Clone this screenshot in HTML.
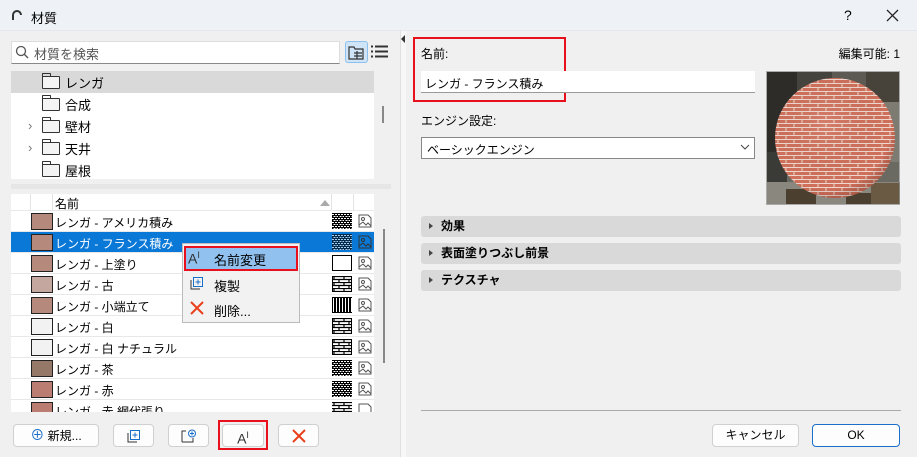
<!DOCTYPE html>
<html><head><meta charset="utf-8">
<style>
*{box-sizing:border-box;margin:0;padding:0}
body{width:917px;height:457px;overflow:hidden;background:#f0f0f0;font-family:"Liberation Sans","Noto Sans CJK JP",sans-serif;font-size:12px;color:#000;position:relative}
.a{position:absolute}
.title{left:0;top:0;width:917px;height:31px;background:#eef2f7;border-bottom:1px solid #e4e8ee}
.row{position:absolute;left:11px;width:363px;height:21px;border-bottom:1px solid #e8e8e8;background:#fff}
.sw{position:absolute;left:20px;top:2px;width:22px;height:17px;border:1px solid #222}
.rt{position:absolute;left:44px;top:3px;white-space:nowrap}
.pat{position:absolute;left:321px;top:2px;width:20px;height:16px}
.img{position:absolute;left:347px;top:3px;width:14px;height:14px}
.btn{position:absolute;top:424px;height:23px;background:#fdfdfd;border:1px solid #d0d0d0;border-radius:4px;text-align:center;line-height:21px}
.sec{position:absolute;left:421px;width:480px;height:21px;background:#d9d9d9;border-radius:3px;font-weight:bold;padding-left:20px;line-height:21px}
.sec:before{content:"";position:absolute;left:8px;top:7px;border-left:4px solid #444;border-top:3.5px solid transparent;border-bottom:3.5px solid transparent}
.tr{position:absolute;left:11px;width:363px;height:22px}
.fd{position:absolute;left:31px;top:5px;width:18px;height:13px;border:1.3px solid #333;border-radius:1px;background:#f4f4f4}
.fd:before{content:"";position:absolute;left:-1px;top:-4px;width:7px;height:3px;border:1.3px solid #333;border-bottom:none;border-radius:1px 1px 0 0}
.tt{position:absolute;left:54px;top:2px;font-size:13px}
.chev{position:absolute;left:17px;top:3px;color:#777;font-size:13px}
</style></head><body>
<svg width="0" height="0" style="position:absolute">
<defs>
<pattern id="b1" width="6" height="4" patternUnits="userSpaceOnUse"><rect width="6" height="4" fill="#000"/><rect x="0" y="1" width="2" height="1" fill="#fff"/><rect x="3" y="1" width="2" height="1" fill="#fff"/><rect x="1.5" y="3" width="2" height="1" fill="#fff"/><rect x="4.5" y="3" width="1.5" height="1" fill="#fff"/></pattern>
<pattern id="b2" width="10" height="6" patternUnits="userSpaceOnUse"><rect width="10" height="6" fill="#fff"/><path d="M0 0.5H10M0 3.5H10M2 0V3M7 3V6" stroke="#000" stroke-width="1.2"/></pattern>
<pattern id="b3" width="3" height="16" patternUnits="userSpaceOnUse"><rect width="3" height="16" fill="#000"/><rect x="1" y="1" width="1" height="14" fill="#fff"/></pattern>
<pattern id="br" width="16" height="8" patternUnits="userSpaceOnUse"><rect width="16" height="8" fill="#d0705a"/><path d="M0 .5H16M0 4.5H16M4 0V4M12 4V8" stroke="#eed8d0" stroke-width="1"/></pattern>
<radialGradient id="sh" cx="0.45" cy="0.4" r="0.6"><stop offset="0" stop-color="#fff" stop-opacity=".1"/><stop offset=".8" stop-color="#000" stop-opacity="0"/><stop offset="1" stop-color="#5a2010" stop-opacity=".35"/></radialGradient>
<clipPath id="cp"><circle cx="69" cy="67" r="60"/></clipPath>
</defs></svg>

<div class="a title"></div>
<svg class="a" style="left:11px;top:9px" width="12" height="12"><path d="M2 11V6a4 4 0 0 1 8 0" fill="none" stroke="#333" stroke-width="2"/></svg>
<div class="a" style="left:31px;top:8px;font-size:13px">材質</div>
<div class="a" style="left:844px;top:7px;font-size:14px">?</div>
<svg class="a" style="left:886px;top:9px" width="13" height="13"><path d="M1 1L12 12M12 1L1 12" stroke="#222" stroke-width="1.3"/></svg>

<div class="a" style="left:11px;top:41px;width:329px;height:23px;background:#fff;border:1px solid #ddd;border-bottom:1px solid #888"></div>
<svg class="a" style="left:15px;top:45px" width="14" height="14"><circle cx="6" cy="6" r="4.5" fill="none" stroke="#555" stroke-width="1.3"/><path d="M9.3 9.3L13 13" stroke="#555" stroke-width="1.4"/></svg>
<div class="a" style="left:34px;top:44px;color:#555;font-size:13px">材質を検索</div>
<div class="a" style="left:345px;top:41px;width:23px;height:22px;background:#cfe4f7;border:1px solid #8cc0ee;border-radius:3px"></div>
<svg class="a" style="left:348px;top:45px" width="17" height="15"><path d="M1 2H6L7 4H15V14H1Z" fill="none" stroke="#333" stroke-width="1.2"/><path d="M6 8H14M6 11H14M9 6V14" stroke="#333" stroke-width="1.2"/></svg>
<svg class="a" style="left:371px;top:45px" width="17" height="13"><path d="M0 1.5H2M4 1.5H17M0 6.5H2M4 6.5H17M0 11.5H2M4 11.5H17" stroke="#333" stroke-width="2"/></svg>

<div class="a" style="left:11px;top:71px;width:363px;height:108px;background:#fff"></div>
<div class="tr" style="top:71px;background:#d9d9d9"><div class="fd"></div><div class="tt">レンガ</div></div>
<div class="tr" style="top:93px"><div class="fd"></div><div class="tt">合成</div></div>
<div class="tr" style="top:115px"><div class="chev">›</div><div class="fd"></div><div class="tt">壁材</div></div>
<div class="tr" style="top:137px"><div class="chev">›</div><div class="fd"></div><div class="tt">天井</div></div>
<div class="tr" style="top:159px"><div class="fd"></div><div class="tt">屋根</div></div>
<div class="a" style="left:382px;top:106px;width:2px;height:17px;background:#888"></div>
<div class="a" style="left:11px;top:184px;width:380px;height:5px;background:#e6e6e6"></div>

<div class="a" style="left:11px;top:194px;width:363px;height:218px;background:#fff"></div>
<div class="a" style="left:11px;top:194px;width:363px;height:17px;background:#fff;border-bottom:1px solid #e8e8e8"></div>
<div class="a" style="left:30px;top:194px;width:1px;height:17px;background:#e4e4e4"></div>
<div class="a" style="left:52px;top:194px;width:1px;height:17px;background:#e4e4e4"></div>
<div class="a" style="left:331px;top:194px;width:1px;height:17px;background:#e4e4e4"></div>
<div class="a" style="left:353px;top:194px;width:1px;height:17px;background:#e4e4e4"></div>
<div class="a" style="left:55px;top:195px">名前</div>
<div class="a" style="left:320px;top:200px;border-bottom:6px solid #aaa;border-left:5px solid transparent;border-right:5px solid transparent"></div>

<div class="row" style="top:211px"><div class="sw" style="background:#b58a7c"></div><div class="rt">レンガ - アメリカ積み</div><svg class="pat"><rect width="20" height="16" fill="url(#b1)"/></svg><svg class="img" viewBox="0 0 14 14"><path d="M1 1H10L13 4V13H1Z" fill="none" stroke="#555"/><circle cx="5" cy="5" r="1.5" fill="none" stroke="#555"/><path d="M1 11L5 8L8 11L10 9L13 12" fill="none" stroke="#555"/></svg></div>
<div class="row" style="top:232px;background:#0a78d7;color:#fff"><div class="sw" style="background:#b58a7c"></div><div class="rt">レンガ - フランス積み</div><svg class="pat"><rect width="20" height="16" fill="url(#b1)"/><rect width="20" height="16" fill="#0a78d7" opacity=".35"/></svg><svg class="img" viewBox="0 0 14 14"><path d="M1 1H10L13 4V13H1Z" fill="none" stroke="#333"/><circle cx="5" cy="5" r="1.5" fill="none" stroke="#333"/><path d="M1 11L5 8L8 11L10 9L13 12" fill="none" stroke="#333"/></svg></div>
<div class="row" style="top:253px"><div class="sw" style="background:#b58a7c"></div><div class="rt">レンガ - 上塗り</div><svg class="pat"><rect x=".5" y=".5" width="19" height="15" fill="#fff" stroke="#000"/></svg><svg class="img" viewBox="0 0 14 14"><path d="M1 1H10L13 4V13H1Z" fill="none" stroke="#555"/><circle cx="5" cy="5" r="1.5" fill="none" stroke="#555"/><path d="M1 11L5 8L8 11L10 9L13 12" fill="none" stroke="#555"/></svg></div>
<div class="row" style="top:274px"><div class="sw" style="background:#c4a8a0"></div><div class="rt">レンガ - 古</div><svg class="pat"><rect width="20" height="16" fill="url(#b2)"/><rect x=".5" y=".5" width="19" height="15" fill="none" stroke="#000"/></svg><svg class="img" viewBox="0 0 14 14"><path d="M1 1H10L13 4V13H1Z" fill="none" stroke="#555"/><circle cx="5" cy="5" r="1.5" fill="none" stroke="#555"/><path d="M1 11L5 8L8 11L10 9L13 12" fill="none" stroke="#555"/></svg></div>
<div class="row" style="top:295px"><div class="sw" style="background:#b58a7c"></div><div class="rt">レンガ - 小端立て</div><svg class="pat"><rect width="20" height="16" fill="url(#b3)"/></svg><svg class="img" viewBox="0 0 14 14"><path d="M1 1H10L13 4V13H1Z" fill="none" stroke="#555"/><circle cx="5" cy="5" r="1.5" fill="none" stroke="#555"/><path d="M1 11L5 8L8 11L10 9L13 12" fill="none" stroke="#555"/></svg></div>
<div class="row" style="top:316px"><div class="sw" style="background:#f2f2f2"></div><div class="rt">レンガ - 白</div><svg class="pat"><rect width="20" height="16" fill="url(#b2)"/><rect x=".5" y=".5" width="19" height="15" fill="none" stroke="#000"/></svg><svg class="img" viewBox="0 0 14 14"><path d="M1 1H10L13 4V13H1Z" fill="none" stroke="#555"/><circle cx="5" cy="5" r="1.5" fill="none" stroke="#555"/><path d="M1 11L5 8L8 11L10 9L13 12" fill="none" stroke="#555"/></svg></div>
<div class="row" style="top:337px"><div class="sw" style="background:#f2f2f2"></div><div class="rt">レンガ - 白 ナチュラル</div><svg class="pat"><rect width="20" height="16" fill="url(#b2)"/><rect x=".5" y=".5" width="19" height="15" fill="none" stroke="#000"/></svg><svg class="img" viewBox="0 0 14 14"><path d="M1 1H10L13 4V13H1Z" fill="none" stroke="#555"/><circle cx="5" cy="5" r="1.5" fill="none" stroke="#555"/><path d="M1 11L5 8L8 11L10 9L13 12" fill="none" stroke="#555"/></svg></div>
<div class="row" style="top:358px"><div class="sw" style="background:#957868"></div><div class="rt">レンガ - 茶</div><svg class="pat"><rect width="20" height="16" fill="url(#b1)"/></svg><svg class="img" viewBox="0 0 14 14"><path d="M1 1H10L13 4V13H1Z" fill="none" stroke="#555"/><circle cx="5" cy="5" r="1.5" fill="none" stroke="#555"/><path d="M1 11L5 8L8 11L10 9L13 12" fill="none" stroke="#555"/></svg></div>
<div class="row" style="top:379px"><div class="sw" style="background:#bb7c72"></div><div class="rt">レンガ - 赤</div><svg class="pat"><rect width="20" height="16" fill="url(#b1)"/></svg><svg class="img" viewBox="0 0 14 14"><path d="M1 1H10L13 4V13H1Z" fill="none" stroke="#555"/><circle cx="5" cy="5" r="1.5" fill="none" stroke="#555"/><path d="M1 11L5 8L8 11L10 9L13 12" fill="none" stroke="#555"/></svg></div>
<div class="row" style="top:400px;height:12px;overflow:hidden;border:none"><div class="sw" style="background:#bb7c72"></div><div class="rt">レンガ - 赤 網代張り</div><svg class="pat"><rect width="20" height="16" fill="url(#b2)"/></svg><svg class="img" viewBox="0 0 14 14"><path d="M1 1H10L13 4V13H1Z" fill="none" stroke="#555"/></svg></div>
<div class="a" style="left:383px;top:229px;width:2px;height:134px;background:#888"></div>

<div class="a" style="left:182px;top:243px;width:118px;height:80px;background:#f2f2f2;border:1px solid #bbb"></div>
<div class="a" style="left:184px;top:246px;width:114px;height:25px;background:#91c1ee;border:2px solid #e8101c"></div>
<div class="a" style="left:188px;top:250px;font-size:14px;color:#333">A<sup style="font-size:9px">I</sup></div>
<div class="a" style="left:214px;top:250px;font-size:13px">名前変更</div>
<svg class="a" style="left:190px;top:276px" width="14" height="14"><path d="M1 4V13H10" fill="none" stroke="#333"/><rect x="3.5" y="1.5" width="9" height="9" fill="none" stroke="#1a6fc9"/><path d="M8 3.5V8.5M5.5 6H10.5" stroke="#1a6fc9"/></svg>
<div class="a" style="left:214px;top:276px;font-size:13px">複製</div>
<svg class="a" style="left:190px;top:301px" width="14" height="14"><path d="M1 1L13 13M13 1L1 13" stroke="#e8401c" stroke-width="2"/></svg>
<div class="a" style="left:214px;top:301px;font-size:13px">削除...</div>

<div class="btn" style="left:13px;width:86px"><span style="color:#1a6fc9;font-size:14px">⊕</span> 新規...</div>
<div class="btn" style="left:113px;width:41px"><svg style="margin-top:4px" width="14" height="14"><path d="M1 4V13H10" fill="none" stroke="#333"/><rect x="3.5" y="1.5" width="9" height="9" fill="none" stroke="#1a6fc9"/><path d="M8 3.5V8.5M5.5 6H10.5" stroke="#1a6fc9"/></svg></div>
<div class="btn" style="left:168px;width:41px"><svg style="margin-top:4px" width="16" height="14"><path d="M1 13V2H5M1 13H12V9" fill="none" stroke="#333"/><circle cx="11" cy="4.5" r="3.5" fill="none" stroke="#1a6fc9"/><path d="M11 2.5V6.5M9 4.5H13" stroke="#1a6fc9"/></svg></div>
<div class="a" style="left:218px;top:420px;width:50px;height:30px;border:2px solid #e8101c"></div>
<div class="btn" style="left:222px;width:42px;font-size:14px;color:#333">A<sup style="font-size:9px">I</sup></div>
<div class="btn" style="left:278px;width:41px"><svg style="margin-top:4px" width="14" height="14"><path d="M1 1L13 13M13 1L1 13" stroke="#e8401c" stroke-width="2"/></svg></div>

<div class="a" style="left:400px;top:31px;width:6px;height:426px;background:#f7f7f7;border-left:1px solid #e0e0e0"></div>
<div class="a" style="left:401px;top:35px;border-right:4px solid #333;border-top:4px solid transparent;border-bottom:4px solid transparent"></div>

<div class="a" style="left:413px;top:37px;width:153px;height:65px;border:2px solid #e8101c"></div>
<div class="a" style="left:421px;top:45px">名前:</div>
<div class="a" style="right:17px;top:45px">編集可能: 1</div>
<div class="a" style="left:421px;top:71px;width:334px;height:22px;background:#fff;border-bottom:1px solid #999;padding:4px 4px;font-size:12px">レンガ - フランス積み</div>
<div class="a" style="left:421px;top:112px">エンジン設定:</div>
<div class="a" style="left:421px;top:137px;width:334px;height:22px;background:#fff;border:1px solid #888;padding:3px 5px">ベーシックエンジン</div>
<svg class="a" style="left:740px;top:144px" width="10" height="7"><path d="M1 1L5 5L9 1" fill="none" stroke="#444"/></svg>
<svg class="a" style="left:766px;top:71px" width="134" height="134">
<rect x=".5" y=".5" width="133" height="133" fill="#6a6a62" stroke="#aaa"/>
<rect x="1" y="1" width="30" height="80" fill="#2e2c28"/><rect x="31" y="1" width="35" height="25" fill="#45433d"/>
<rect x="66" y="1" width="34" height="20" fill="#5c5a52"/><rect x="100" y="1" width="33" height="30" fill="#47433a"/>
<rect x="100" y="31" width="33" height="60" fill="#7e7c72"/><rect x="1" y="81" width="20" height="30" fill="#3a3a36"/>
<rect x="1" y="111" width="133" height="22" fill="#8a887e"/><rect x="20" y="118" width="30" height="15" fill="#4b3f30"/><rect x="80" y="122" width="25" height="11" fill="#4b3f30"/><rect x="105" y="112" width="28" height="21" fill="#6a5a44"/>
<g clip-path="url(#cp)"><rect width="134" height="134" fill="url(#br)"/><rect width="134" height="134" fill="url(#sh)"/></g>
</svg>
<div class="sec" style="top:216px">効果</div>
<div class="sec" style="top:243px">表面塗りつぶし前景</div>
<div class="sec" style="top:270px">テクスチャ</div>
<div class="a" style="left:421px;top:410px;width:480px;height:1px;background:#aaa"></div>
<div class="btn" style="left:712px;width:87px">キャンセル</div>
<div class="btn" style="left:812px;width:88px;border-color:#1a6fc9">OK</div>
</body></html>
